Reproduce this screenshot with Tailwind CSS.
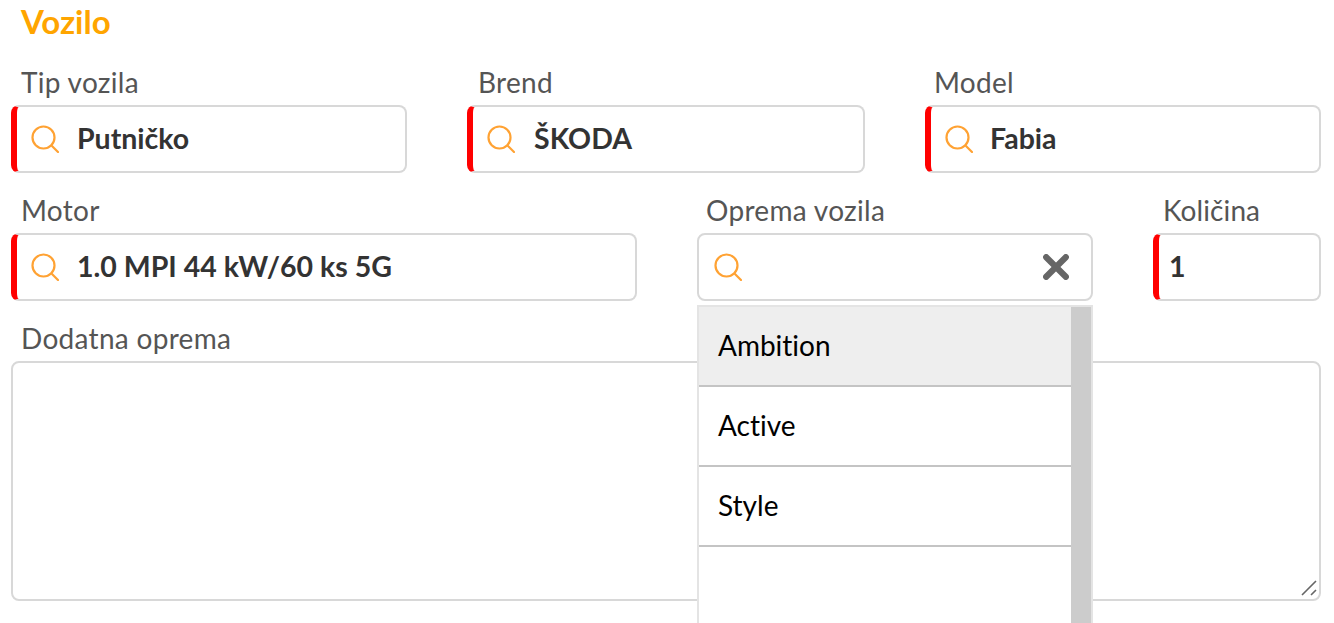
<!DOCTYPE html>
<html><head><meta charset="utf-8"><script src="https://cdn.jsdelivr.net/npm/@tailwindcss/browser@4"></script></head>
<body class="bg-white overflow-hidden">
<div class="w-[1334px] h-[623px] overflow-hidden relative pl-[11px] pr-[13px] font-['Lato','Noto_Sans',sans-serif] [font-variant-ligatures:none]">
  <h2 class="h-[44px] pl-[10px] pt-[2px] text-[33px] leading-[38px] font-bold text-[#ffa500]">Vozilo</h2>
  <div class="flex gap-[60px] h-[148px] pt-[20px]">
    <div class="w-[396px]"><div class="h-[41px] pl-[10px] text-[28px] leading-[36px] tracking-[0.3px] text-[#555]">Tip vozila</div>
      <div class="h-[68px] flex items-center border-2 border-[#d8d8d8] border-l-[6px] border-l-[#ff0000] rounded-[8px] pl-[14px]">
        <svg width="28" height="28" viewBox="0 0 28 28" fill="none" stroke="#ffa233" stroke-width="2.2" stroke-linecap="round"><circle cx="12.5" cy="12.5" r="11"/><path d="M20.5 20.5l6.5 6.5"/></svg>
        <span class="ml-[18px] mb-[2px] text-[28.5px] font-bold text-[#333]">Putničko</span></div></div>
    <div class="w-[398px]"><div class="h-[41px] pl-[11px] text-[28px] leading-[36px] tracking-[0.3px] text-[#555]">Brend</div>
      <div class="h-[68px] flex items-center border-2 border-[#d8d8d8] border-l-[6px] border-l-[#ff0000] rounded-[8px] pl-[14px]">
        <svg width="28" height="28" viewBox="0 0 28 28" fill="none" stroke="#ffa233" stroke-width="2.2" stroke-linecap="round"><circle cx="12.5" cy="12.5" r="11"/><path d="M20.5 20.5l6.5 6.5"/></svg>
        <span class="ml-[19px] mb-[2px] text-[28.5px] font-bold text-[#333]">ŠKODA</span></div></div>
    <div class="w-[396px]"><div class="h-[41px] pl-[9px] text-[28px] leading-[36px] tracking-[0.3px] text-[#555]">Model</div>
      <div class="h-[68px] flex items-center border-2 border-[#d8d8d8] border-l-[6px] border-l-[#ff0000] rounded-[8px] pl-[14px]">
        <svg width="28" height="28" viewBox="0 0 28 28" fill="none" stroke="#ffa233" stroke-width="2.2" stroke-linecap="round"><circle cx="12.5" cy="12.5" r="11"/><path d="M20.5 20.5l6.5 6.5"/></svg>
        <span class="ml-[17px] mb-[2px] text-[28.5px] font-bold text-[#333]">Fabia</span></div></div>
  </div>
  <div class="flex gap-[60px] h-[128px]">
    <div class="w-[626px]"><div class="h-[41px] pl-[10px] text-[28px] leading-[36px] tracking-[0.3px] text-[#555]">Motor</div>
      <div class="h-[68px] flex items-center border-2 border-[#d8d8d8] border-l-[6px] border-l-[#ff0000] rounded-[8px] pl-[14px]">
        <svg width="28" height="28" viewBox="0 0 28 28" fill="none" stroke="#ffa233" stroke-width="2.2" stroke-linecap="round"><circle cx="12.5" cy="12.5" r="11"/><path d="M20.5 20.5l6.5 6.5"/></svg>
        <span class="ml-[18px] mb-[2px] text-[28.5px] font-bold text-[#333]">1.0 MPI 44 kW/60 ks 5G</span></div></div>
    <div class="w-[396px] relative"><div class="h-[41px] pl-[9px] text-[28px] leading-[36px] tracking-[0.3px] text-[#555]">Oprema vozila</div>
      <div class="h-[68px] flex items-center justify-between border-2 border-[#d8d8d8] rounded-[8px] pl-[15px] pr-[22px]">
        <svg width="28" height="28" viewBox="0 0 28 28" fill="none" stroke="#ffa233" stroke-width="2.2" stroke-linecap="round"><circle cx="12.5" cy="12.5" r="11"/><path d="M20.5 20.5l6.5 6.5"/></svg>
        <svg width="26" height="26" viewBox="0 0 26 26" fill="none" stroke="#666" stroke-width="6.2" stroke-linecap="round"><path d="M3.2 3.2l19.6 19.6M22.8 3.2L3.2 22.8"/></svg>
      </div>
      <div class="absolute z-10 left-0 top-[113px] w-[396px] h-[400px] bg-white border-2 border-[#e4e4e4] flex">
        <div class="flex-1">
          <div class="h-[80px] flex items-center pl-[19px] pb-[3px] text-[28px] text-black bg-[#eee] border-b-2 border-[#c4c4c4]">Ambition</div>
          <div class="h-[80px] flex items-center pl-[19px] pb-[3px] text-[28px] text-black border-b-2 border-[#c4c4c4]">Active</div>
          <div class="h-[80px] flex items-center pl-[19px] pb-[3px] text-[28px] text-black border-b-2 border-[#c4c4c4]">Style</div>
        </div>
        <div class="w-[20px] bg-[#ccc]"></div>
      </div>
    </div>
    <div class="w-[168px]"><div class="h-[41px] pl-[10px] text-[28px] leading-[36px] tracking-[0.1px] text-[#555]">Količina</div>
      <div class="h-[68px] flex items-center border-2 border-[#d8d8d8] border-l-[6px] border-l-[#ff0000] rounded-[8px] pl-[10px]">
        <span class="mb-[2px] text-[28.5px] font-bold text-[#333]">1</span></div></div>
  </div>
  <div class="h-[41px] pl-[10px] text-[28px] leading-[36px] tracking-[0.3px] text-[#555]">Dodatna oprema</div>
  <div class="relative h-[240px] w-[1310px] border-2 border-[#d8d8d8] rounded-[8px]">
    <svg class="absolute right-0 bottom-0" width="20" height="20" viewBox="0 0 20 20" fill="none" stroke="#666" stroke-width="1.6"><path d="M3 16L17 2M12 16l5-5"/></svg>
  </div>
</div>
</body></html>
